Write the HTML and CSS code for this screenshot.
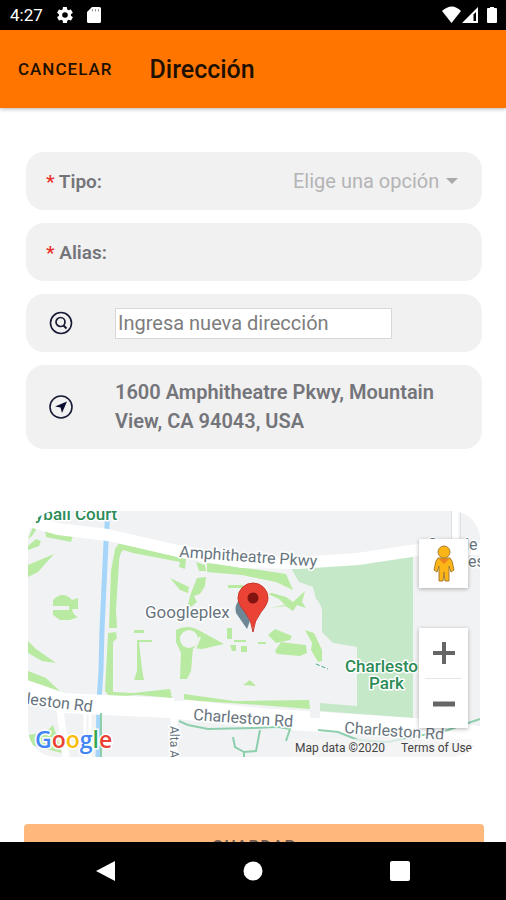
FILE: index.html
```html
<!DOCTYPE html>
<html lang="es">
<head>
  <meta charset="UTF-8">
  <title>Dirección</title>
  <meta name="viewport" content="width=device-width, initial-scale=1.0">
  <link rel="stylesheet" href="styles.css">
</head>
<body>

  <div class="status-bar">
    <span class="clock">4:27</span>
    <svg width="16" height="16" viewBox="2 2 20 20"><path fill="#fff" d="M19.4 13c0-.3.1-.6.1-1s0-.7-.1-1l2.1-1.6c.2-.2.2-.4.1-.6l-2-3.500c-.1-.2-.4-.3-.6-.2l-2.500 1c-.5-.4-1.100-.700-1.700-1l-.4-2.600c0-.3-.2-.5-.5-.5h-4c-.2 0-.4.2-.5.400l-.4 2.700c-.6.200-1.100.600-1.700 1l-2.400-1c-.2-.1-.5 0-.6.200l-2 3.500c-.1.200-.1.500.1.600L4.500 11c0 .3-.1.600-.1 1s0 .7.100 1l-2.100 1.600c-.2.200-.2.400-.1.600l2 3.500c.1.200.4.300.6.200l2.500-1c.5.400 1.100.700 1.700 1l.4 2.700c0 .200.200.400.500.400h4c.2 0 .5-.2.500-.4l.4-2.700c.6-.2 1.200-.6 1.700-1l2.500 1c.2.1.5 0 .6-.2l2-3.500c.1-.2.100-.5-.1-.6L19.400 13zM12 15.500a3.500 3.500 0 1 1 0-7 3.500 3.500 0 0 1 0 7z"/></svg>
    <svg width="14" height="16" viewBox="0 0 14 16"><path fill="#fff" d="M5 0h7.500A1.500 1.500 0 0 1 14 1.500v13a1.500 1.500 0 0 1-1.500 1.500h-11A1.500 1.500 0 0 1 0 14.500V5z"/><path stroke="#999" d="M5.500 2v2.500M8.500 2v2.500M11.500 2v2.500"/></svg>
    <svg class="signals" width="56" height="18" viewBox="0 0 56 18">
      <path fill="#fff" d="M0 5Q10-4 19 5L9.500 17z"/>
      <path fill="#fff" d="M20 17L36 1v16z"/>
      <path fill="#000" d="M31.500 8.500L34 6v9h-2.500z"/>
      <path fill="#fff" d="M46 2h2V1h4v1h2a1 1 0 0 1 1 1v13a1 1 0 0 1-1 1h-8a1 1 0 0 1-1-1V3a1 1 0 0 1 1-1z"/>
    </svg>
  </div>

  <header class="header">
    <button type="button" class="cancel">CANCELAR</button>
    <h1>Dirección</h1>
  </header>

  <main class="content">
    <form class="form">
      <div class="field">
        <label for="tipo"><span class="required">*</span> Tipo:</label>
        <div class="picker">
          <select id="tipo">
            <option>Elige una opción</option>
          </select>
          <span class="arrow"></span>
        </div>
      </div>

      <div class="field">
        <label for="alias"><span class="required">*</span> Alias:</label>
        <input class="alias" id="alias" type="text">
      </div>

      <div class="field">
        <label class="icon" for="busqueda" aria-label="Buscar">
          <svg width="24" height="24" viewBox="0 0 24 24" fill="none" stroke="#171a35"><circle cx="12" cy="12" r="10.500" stroke-width="1.600"/><circle cx="11.500" cy="11" r="4.500" stroke-width="1.700"/><path stroke-width="2" d="M14.500 14.500l3 3"/></svg>
        </label>
        <input class="search" id="busqueda" type="text" placeholder="Ingresa nueva dirección">
      </div>

      <div class="field address">
        <span class="icon">
          <svg width="24" height="24" viewBox="0 0 24 24"><circle cx="12" cy="12" r="11" fill="none" stroke="#171a35" stroke-width="1.600"/><path fill="#0b0d30" d="M18 6.500L13 18l-1.500-5.500L6 11.500z"/></svg>
        </span>
        <p>1600 Amphitheatre Pkwy, Mountain View, CA 94043, USA</p>
      </div>

      <div class="map">
        <svg class="map-canvas" viewBox="0 0 452 246" preserveAspectRatio="xMidYMid slice">
          <rect width="452" height="246" fill="#f1f2f4"/>

          <!-- park -->
          <path fill="#c5e8c9" d="M262 55L385 45V207L292 200V192L329 195V136L305 132L294 121V99Q292 91 288 88L285 76L271 71z"/>

          <!-- lawns -->
          <g fill="#b9eaa2">
            <path d="M0 28L5 16L9 17L4 25zM0 35L8 28L13 30L11 35L0 39zM17 19L45 25L43 31L18 26zM0 54L26 43L10 61L0 66z"/>
            <path d="M0 130L8 138L28 152L14 150L0 142zM0 160L18 167L36 184L20 180L0 171z"/>
            <path d="M25 89Q35 79 44 89L50 87V98H44Q45 104 50 106L42 109H32L25 104V99H41V95H25z"/>
            <path d="M0 224L18 221L25 214L29 226L34 242L14 237L3 234z"/>
            <path d="M92 31L112 37L158 48L157 58L151 56L152 51L105 42L95 39Q91 43 91 52L88 99L89 117H81L83 60L87 38z"/>
            <path d="M142 67L161 76L160 82L152 79zM168 51L177 54L178 60L171 60zM169 67L178 66L177 75L172 83L166 85L169 91L163 96L160 93L163 82z"/>
            <path d="M179 52L232 59L258 63L265 79L248 71L214 64L179 61z"/>
            <path d="M242 97L258 95L251 88L240 83L244 82L258 86L265 91L277 80L274 91L278 97L269 94L265 100L256 94z"/>
            <path d="M200 74H215V77H200z"/>
            <path d="M80 122L88 121L89 127L85 131V181L105 182L142 178L144 187L110 184L82 186L77 180zM109 129H124V131H111L114 158L116 169H106L109 160zM106 119H116V122H106z"/>
            <path d="M148 119Q160 112 174 121L196 133L174 138L165 137L163 160L159 168H152L153 142L148 131zM156 183L206 190L281 189L282 198L232 194L156 189zM215 174L222 169L228 175z"/>
            <path d="M199 117H204V128H199zM202 134H208V140H204zM213 135H219V141H213zM206 129H218V131H206zM230 131H238V133H230z"/>
            <path d="M240 124L247 118L264 125L262 129L248 132zM247 140L253 131L269 133L278 134L279 142L272 145L249 143zM277 119L286 122L294 139V150L290 151L283 139L284 132z"/>
          </g>
          <circle cx="161" cy="128" r="9" fill="#f1f2f4"/>
          <path stroke="#f1f2f4" stroke-width="2" d="M172 126L167 138"/>

          <!-- river -->
          <path fill="none" stroke="#a6d5fa" stroke-width="5" d="M80 0L78 31L74 119L73 160L71 190L70 246"/>

          <!-- roads -->
          <g fill="none" stroke="#fff" stroke-linejoin="round">
            <path stroke-width="12" d="M-5 8L30 18L80 24L150 40L215 51L270 52L330 48L396 38L452 38"/>
            <path stroke-width="20" d="M-5 178L35 192L142 197L232 207L384 217L460 226"/>
            <path stroke-width="7" d="M32 198L38 246M146 205V246M427 0V38"/>
            <path stroke-width="3" d="M57 202V246M62 202V246"/>
          </g>
          <path stroke="#f1f2f4" stroke-width="10" d="M287 207V193M151 190V178"/>
          <path stroke="#dcdfe3" d="M423.500 0V30M432.500 0V30" fill="none"/>

          <!-- trails -->
          <path fill="none" stroke="#8dcfad" stroke-width="2" d="M73 202V246M151 210L160 214L180 218L225 217L250 216L262 218L258 230M232 219L228 240L216 241L207 236L205 226M216 241V246M290 219L310 221L330 229L360 231L420 219L452 208"/>
          <path fill="none" stroke="#49aa8d" stroke-width="1" stroke-dasharray="4 2" d="M288 153L300 158"/>

          <!-- labels -->
          <g class="place park-name">
            <text x="7" y="9">yball Court</text>
            <text x="317" y="161">Charleston</text>
            <text x="341" y="178">Park</text>
          </g>
          <g class="place">
            <text class="big" x="117" y="107">Googleplex</text>
            <text x="399" y="39">Google les</text>
            <text x="440" y="56">es</text>
            <text transform="translate(151 46) rotate(4)">Amphitheatre Pkwy</text>
          </g>
          <g class="place">
            <text transform="translate(-2 193) rotate(7)">leston Rd</text>
            <text transform="translate(165 209) rotate(4)">Charleston Rd</text>
            <text transform="translate(316 222) rotate(4)">Charleston Rd</text>
            <text class="small" transform="translate(142 215) rotate(90)">Alta Ave</text>
          </g>

          <!-- marker -->
          <path fill="#6d8795" d="M212 88Q206 94 208 102L219 118L222 110z"/>
          <path fill="#ea4335" stroke="#c9352b" stroke-width="1" d="M225 121Q224 110 217 101Q210 93 210 87A15 15 0 0 1 240 87Q240 93 233 101Q226 110 225 121z"/>
          <circle cx="225" cy="87" r="5.500" fill="#811411"/>

          <text class="logo" x="7" y="237"><tspan fill="#4285f4">G</tspan><tspan fill="#ea4335">o</tspan><tspan fill="#fbbc05">o</tspan><tspan fill="#4285f4">g</tspan><tspan fill="#34a853">l</tspan><tspan fill="#ea4335">e</tspan></text>
        </svg>

        <div class="map-controls">
          <button type="button" class="map-button" aria-label="Street View">
            <svg width="22" height="38" viewBox="0 0 22 38"><g fill="#fbb516" stroke="#a77d30" stroke-width="1"><path d="M5 13h12l2 3 2 9-3 2-2-6v15h-4l-1-9-1 9H6V21l-2 6-3-2 2-9z"/><circle cx="11" cy="7" r="6"/></g><path fill="#ef8120" d="M6 14h10l-5 5z"/></svg>
          </button>
          <div class="zoom">
            <button type="button" aria-label="Acercar"><svg width="22" height="22" viewBox="0 0 22 22"><path stroke="#666" stroke-width="4" d="M0 11h22M11 0v22"/></svg></button>
            <button type="button" aria-label="Alejar"><svg width="22" height="22" viewBox="0 0 22 22"><path stroke="#666" stroke-width="5" d="M0 11h22"/></svg></button>
          </div>
        </div>
        <div class="map-credits">
          <span>Map data ©2020</span>
          <a href="#">Terms of Use</a>
        </div>
      </div>

      <button type="submit" class="save">GUARDAR</button>
    </form>
  </main>

  <nav class="nav-bar">
    <button type="button" aria-label="Atrás"><svg width="20" height="22" viewBox="0 0 20 22"><path fill="#fff" d="M0 11L19 1v20z"/></svg></button>
    <button type="button" aria-label="Inicio"><svg width="20" height="20" viewBox="0 0 20 20"><circle cx="10" cy="10" r="9.500" fill="#fff"/></svg></button>
    <button type="button" aria-label="Recientes"><svg width="20" height="20" viewBox="0 0 20 20"><rect width="20" height="20" rx="2" fill="#fff"/></svg></button>
  </nav>

</body>
</html>
```
FILE: styles.css
```css
* {
  box-sizing: border-box;
}
body {
  margin: 0;
  height: 100vh;
  display: flex;
  flex-direction: column;
  overflow: hidden;
  background: #fff;
  color: #74757a;
  font-family: Roboto, sans-serif;
  font-size: 20px;
}
button, input, select {
  margin: 0;
  padding: 0;
  border: 0;
  background: none;
  font-family: inherit;
  font-size: inherit;
  color: inherit;
}
svg {
  display: block;
}
.status-bar {
  display: flex;
  align-items: center;
  flex-shrink: 0;
  gap: 14px;
  height: 30px;
  padding: 0 8px 0 10px;
  background: #000;
  color: #fff;
}
.clock {
  font-size: 17px;
}
.signals {
  margin-left: auto;
}
.header {
  display: flex;
  align-items: center;
  flex-shrink: 0;
  gap: 37px;
  height: 78px;
  padding: 0 18px;
  background: #ff7500;
  color: #201000;
  box-shadow: 0 1px 4px rgba(0, 0, 0, 0.3);
  z-index: 1;
}
.cancel {
  font-size: 17px;
  font-weight: 500;
  letter-spacing: 1px;
}
.header h1 {
  margin: 0;
  font-size: 25px;
  font-weight: 500;
}
.content {
  flex: 1;
  min-height: 0;
  overflow: hidden;
  padding: 44px 22px 0 24px;
}
.form {
  display: flex;
  flex-direction: column;
  gap: 13px;
}
.field {
  display: flex;
  align-items: center;
  min-height: 58px;
  margin: 0 2px;
  padding: 0 24px 0 20px;
  border-radius: 18px;
  background: #f1f1f1;
  font-weight: 600;
}
.field label {
  font-size: 19px;
}
.required {
  color: #e8302a;
}
.picker {
  display: flex;
  align-items: center;
  gap: 6px;
  margin-left: auto;
  color: #b4b4b6;
}
.picker select {
  appearance: none;
  font-weight: 400;
}
.arrow {
  border: 6px solid transparent;
  border-top-color: #aaa;
  border-bottom: 0;
}
.alias {
  flex: 1;
  min-width: 0;
  margin-left: 8px;
  outline: 0;
}
.icon {
  flex-shrink: 0;
  width: 69px;
  padding-left: 3px;
}
.search {
  width: 277px;
  height: 31px;
  padding: 0 2px;
  border: 1px solid #d8d8d8;
  background: #fff;
}
.search::placeholder {
  color: #7d7d7d;
}
.address {
  min-height: 84px;
}
.address p {
  margin: 0;
  line-height: 29px;
}
.map {
  position: relative;
  height: 246px;
  margin: 49px 4px 0;
  border-radius: 28px;
  overflow: hidden;
}
.map-canvas {
  width: 100%;
  height: 100%;
}
.place {
  font-size: 16px;
  fill: #67747d;
  stroke: #fff;
  stroke-width: 3px;
  stroke-linejoin: round;
  paint-order: stroke;
}
.big {
  font-size: 17px;
}
.park-name {
  font-size: 17px;
  font-weight: 500;
  fill: #2b8c57;
}
.small {
  font-size: 12px;
}
.logo {
  font-family: "Open Sans", sans-serif;
  font-size: 23px;
  font-weight: 600;
  stroke: #fff;
  stroke-width: 3px;
  paint-order: stroke;
}
.map-controls {
  position: absolute;
  top: 28px;
  right: 12px;
  display: flex;
  flex-direction: column;
  gap: 40px;
}
.map-button, .zoom {
  display: grid;
  place-items: center;
  width: 49px;
  background: #fff;
  box-shadow: 0 1px 4px rgba(0, 0, 0, 0.3);
}
.map-button {
  height: 49px;
}
.zoom button {
  display: grid;
  place-items: center;
  width: 37px;
  height: 50px;
}
.zoom button + button {
  border-top: 1px solid #e6e6e6;
}
.map-credits {
  position: absolute;
  right: 8px;
  bottom: 0;
  display: flex;
  gap: 16px;
  padding-left: 4px;
  background: rgba(245, 245, 245, 0.7);
  color: #444;
  font-size: 12px;
  line-height: 18px;
}
.map-credits a {
  color: inherit;
  text-decoration: none;
}
.save {
  height: 44px;
  margin-top: 54px;
  border-radius: 4px;
  background: #ffb87c;
  color: #6f5a4e;
  font-size: 17px;
  font-weight: 500;
  letter-spacing: 1px;
}
.nav-bar {
  display: flex;
  align-items: center;
  justify-content: space-between;
  flex-shrink: 0;
  height: 58px;
  padding: 0 19%;
  background: #000;
  z-index: 1;
}
```
